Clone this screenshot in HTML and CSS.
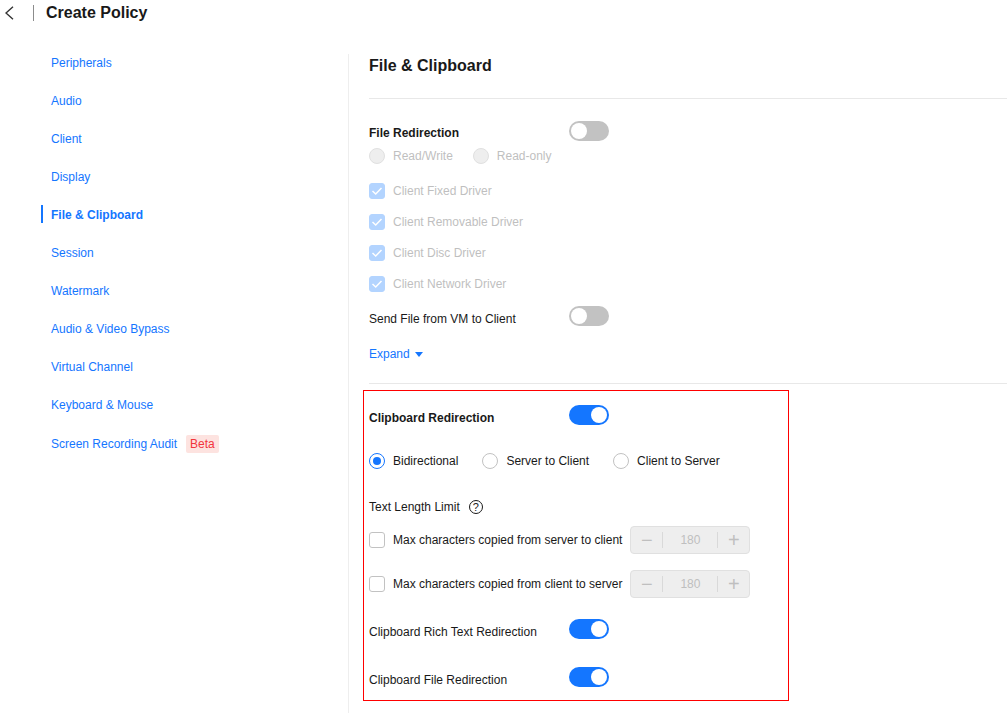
FILE: index.html
```html
<!DOCTYPE html>
<html lang="en">
<head>
<meta charset="utf-8">
<title>Create Policy</title>
<link rel="stylesheet" href="styles.css">
</head>
<body>
<header class="topbar">
  <svg class="back" width="10" height="14" viewBox="0 0 10 14"><path d="M8 0.8 L1 7 L8 13.2" fill="none" stroke="#333" stroke-width="1.4"/></svg>
  <span class="topsep"></span>
  <h1 class="pagetitle">Create Policy</h1>
</header>
<div class="main">
  <nav class="sidenav">
    <a class="navitem">Peripherals</a>
    <a class="navitem">Audio</a>
    <a class="navitem">Client</a>
    <a class="navitem">Display</a>
    <a class="navitem active">File &amp; Clipboard</a>
    <a class="navitem">Session</a>
    <a class="navitem">Watermark</a>
    <a class="navitem">Audio &amp; Video Bypass</a>
    <a class="navitem">Virtual Channel</a>
    <a class="navitem">Keyboard &amp; Mouse</a>
    <a class="navitem last">Screen Recording Audit <span class="badge">Beta</span></a>
  </nav>
  <main class="content">
    <h2 class="sectiontitle">File &amp; Clipboard</h2>

    <div class="row mt22"><span class="label strong first">File Redirection</span><span class="toggle"></span></div>
    <div class="row mt5">
      <span class="radio disabled"></span><span class="optlabel dim">Read/Write</span>
      <span class="radio disabled gap20"></span><span class="optlabel dim">Read-only</span>
    </div>
    <div class="row mt15"><span class="check checked"><svg width="14" height="14" viewBox="0 0 14 14"><path d="M2.5 7 L5.7 10 L11.5 4" fill="none" stroke="#fff" stroke-width="1.5"/></svg></span><span class="optlabel dim">Client Fixed Driver</span></div>
    <div class="row mt11"><span class="check checked"><svg width="14" height="14" viewBox="0 0 14 14"><path d="M2.5 7 L5.7 10 L11.5 4" fill="none" stroke="#fff" stroke-width="1.5"/></svg></span><span class="optlabel dim">Client Removable Driver</span></div>
    <div class="row mt11"><span class="check checked"><svg width="14" height="14" viewBox="0 0 14 14"><path d="M2.5 7 L5.7 10 L11.5 4" fill="none" stroke="#fff" stroke-width="1.5"/></svg></span><span class="optlabel dim">Client Disc Driver</span></div>
    <div class="row mt11"><span class="check checked"><svg width="14" height="14" viewBox="0 0 14 14"><path d="M2.5 7 L5.7 10 L11.5 4" fill="none" stroke="#fff" stroke-width="1.5"/></svg></span><span class="optlabel dim">Client Network Driver</span></div>
    <div class="row mt12"><span class="label">Send File from VM to Client</span><span class="toggle"></span></div>
    <div class="row mt18"><a class="expand">Expand</a><span class="caret"></span></div>
    <div class="divider"></div>

    <div class="row mt21"><span class="label strong">Clipboard Redirection</span><span class="toggle on"></span></div>
    <div class="row mt26">
      <span class="radio selected"></span><span class="optlabel">Bidirectional</span>
      <span class="radio gap24"></span><span class="optlabel">Server to Client</span>
      <span class="radio gap24"></span><span class="optlabel">Client to Server</span>
    </div>
    <div class="row mt26 lengthrow"><span>Text Length Limit</span><span class="help">?</span></div>
    <div class="row tall mt10">
      <span class="check"></span><span class="optlabel">Max characters copied from server to client</span>
      <span class="stepper"><span class="stepbtn">&minus;</span><span class="stepval">180</span><span class="stepbtn">+</span></span>
    </div>
    <div class="row tall mt16">
      <span class="check"></span><span class="optlabel">Max characters copied from client to server</span>
      <span class="stepper"><span class="stepbtn">&minus;</span><span class="stepval">180</span><span class="stepbtn">+</span></span>
    </div>
    <div class="row mt21"><span class="label">Clipboard Rich Text Redirection</span><span class="toggle on"></span></div>
    <div class="row mt28"><span class="label">Clipboard File Redirection</span><span class="toggle on"></span></div>
  </main>
</div>
<div class="highlight"></div>
</body>
</html>
```

FILE: styles.css
```css
* { box-sizing: border-box; }
html, body { margin: 0; height: 713px; overflow: hidden; background: #fff; }
body { position: relative; font: 12px/20px "Liberation Sans", Arial, sans-serif; color: #191919; }

.topbar { height: 25px; display: flex; align-items: center; }
.back { margin-left: 5px; }
.topsep { width: 1px; height: 16px; background: #8c8c8c; margin-left: 18px; }
.pagetitle { margin: 0 0 0 12px; font-size: 16px; line-height: 24px; font-weight: 700; color: #191919; }

.main { display: flex; height: 688px; }
.sidenav { width: 348px; flex: none; padding: 19px 0 0 41px; }
.navitem { display: flex; align-items: center; height: 38px; padding-left: 10px; color: #1476ff; position: relative; }
.navitem.last { margin-top: 1px; }
.navitem.active { font-weight: 700; }
.navitem.active::before { content: ""; position: absolute; left: 0; top: 9px; width: 2px; height: 18px; background: #1476ff; }
.badge { margin-left: 9px; height: 18px; line-height: 18px; padding: 0 4px; border-radius: 2px; background: #fde3e0; color: #f2353c; }

.content { flex: 1; margin-top: 29px; border-left: 1px solid #eeeeee; padding-left: 20px; }
.sectiontitle { margin: 0; height: 45px; padding: 1px 0 21px; line-height: 22px; font-size: 16px; font-weight: 700; border-bottom: 1px solid #e8e8e8; }
.divider { height: 1px; background: #e8e8e8; margin-top: 19px; }

.row { display: flex; align-items: center; height: 20px; }
.row.tall { height: 28px; }
.mt5 { margin-top: 5px; }
.mt10 { margin-top: 10px; }
.mt11 { margin-top: 11px; }
.mt12 { margin-top: 12px; }
.mt15 { margin-top: 15px; }
.mt16 { margin-top: 16px; }
.mt18 { margin-top: 18px; }
.mt21 { margin-top: 21px; }
.mt22 { margin-top: 22px; }
.mt26 { margin-top: 26px; }
.mt28 { margin-top: 28px; }
.lengthrow { height: 19px; }

.label { width: 200px; flex: none; padding-top: 6px; }
.label.first { padding-top: 4px; }
.label.strong { font-weight: 700; }
.optlabel { margin-left: 8px; }
.dim { color: #bfbfbf; }

.toggle { width: 40px; height: 20px; border-radius: 10px; background: #c2c2c2; position: relative; flex: none; }
.toggle::after { content: ""; position: absolute; top: 2px; left: 2px; width: 16px; height: 16px; border-radius: 50%; background: #fff; }
.toggle.on { background: #1476ff; }
.toggle.on::after { left: 22px; }

.radio { width: 16px; height: 16px; border-radius: 50%; border: 1px solid #c2c2c2; background: #fff; flex: none; position: relative; }
.radio.disabled { background: #eeeeee; border-color: #e0e0e0; }
.radio.selected { border-color: #1476ff; }
.radio.selected::after { content: ""; position: absolute; left: 3px; top: 3px; width: 8px; height: 8px; border-radius: 50%; background: #1476ff; }
.gap20 { margin-left: 20px; }
.gap24 { margin-left: 24px; }

.check { width: 16px; height: 16px; border-radius: 3px; border: 1px solid #c2c2c2; background: #fff; flex: none; display: flex; align-items: center; justify-content: center; }
.check.checked { background: #b3d4ff; border-color: #b3d4ff; }

.expand { color: #1476ff; }
.caret { margin-left: 5px; width: 0; height: 0; border: 4px solid transparent; border-top: 5px solid #1476ff; border-bottom: 0; }

.help { margin-left: 9px; width: 14px; height: 14px; border: 1px solid #191919; border-radius: 50%; font-size: 11px; line-height: 12px; text-align: center; }

.stepper { margin-left: 8px; width: 120px; height: 28px; display: flex; align-items: center; background: #eeeeee; border: 1px solid #e0e0e0; border-radius: 4px; color: #bfbfbf; }
.stepbtn { width: 31px; flex: none; text-align: center; font-size: 20px; line-height: 16px; }
.stepval { flex: 1; height: 16px; line-height: 16px; text-align: center; border-left: 1px solid #d9d9d9; border-right: 1px solid #d9d9d9; }

.highlight { position: absolute; left: 363px; top: 390px; width: 426px; height: 311px; border: 1px solid #f00; }
```
